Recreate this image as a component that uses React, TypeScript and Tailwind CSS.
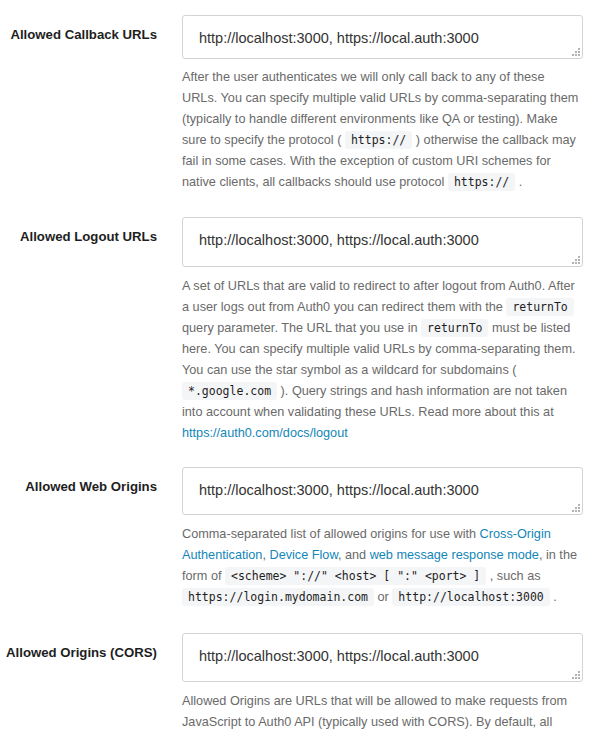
import React from "react";

const C = ({ children }: { children: React.ReactNode }) => (
  <code className="whitespace-pre rounded-[3px] bg-[#f4f5f7] px-[6px] py-[2px] font-['DejaVu_Sans_Mono',monospace] text-[11.5px] leading-none text-[#1d1d1d]">
    {children}
  </code>
);

const A = ({ children }: { children: React.ReactNode }) => (
  <a className="text-[#1286b8]" href="#">
    {children}
  </a>
);

const Dots = () => (
  <svg
    className="pointer-events-none absolute bottom-[3px] right-[3px]"
    width="9"
    height="9"
    viewBox="0 0 9 9"
  >
    <g fill="#b3b3b3">
      <rect x="7" y="1" width="2" height="2" />
      <rect x="4" y="4" width="2" height="2" />
      <rect x="7" y="4" width="2" height="2" />
      <rect x="1" y="7" width="2" height="2" />
      <rect x="4" y="7" width="2" height="2" />
      <rect x="7" y="7" width="2" height="2" />
    </g>
  </svg>
);

type SectionProps = {
  label: string;
  taClass: string;
  helpClass: string;
  lines: React.ReactNode[];
  sectionClass: string;
};

const Section = ({ label, taClass, helpClass, lines, sectionClass }: SectionProps) => (
  <div className={"flex " + sectionClass}>
    <div className="w-[157px] shrink-0 whitespace-nowrap pt-[10px] text-right text-[13.2px] font-bold leading-5 text-[#1e1e1e]">
      {label}
    </div>
    <div className="ml-[25px] w-[401px] shrink-0">
      <div className="relative">
        <textarea
          readOnly
          defaultValue="http://localhost:3000, https://local.auth:3000"
          className={
            "block w-full resize-none overflow-hidden rounded-[3px] border border-[#d3d3d3] bg-white px-[16px] pt-[12px] text-[14.5px] leading-5 text-[#333] outline-none " +
            taClass
          }
        />
        <Dots />
      </div>
      <div className={"text-[12.7px] leading-[21px] text-[#6a6a6a] " + helpClass}>
        {lines.map((l, i) => (
          <div key={i} className="h-[21px] whitespace-nowrap">
            {l}
          </div>
        ))}
      </div>
    </div>
  </div>
);

export default function App() {
  return (
    <div className="h-[734px] w-[610px] overflow-hidden bg-white pt-[15px] font-['Liberation_Sans',Arial,sans-serif]">
      <Section
        label="Allowed Callback URLs"
        taClass="h-[44px]"
        helpClass="mt-[8px]"
        sectionClass="mb-[24px]"
        lines={[
          "After the user authenticates we will only call back to any of these",
          "URLs. You can specify multiple valid URLs by comma-separating them",
          "(typically to handle different environments like QA or testing). Make",
          <>
            sure to specify the protocol ( <C>https://</C> ) otherwise the callback may
          </>,
          "fail in some cases. With the exception of custom URI schemes for",
          <>
            native clients, all callbacks should use protocol <C>https://</C> .
          </>,
        ]}
      />
      <Section
        label="Allowed Logout URLs"
        taClass="h-[50px]"
        helpClass="mt-[9px]"
        sectionClass="mb-[23px]"
        lines={[
          "A set of URLs that are valid to redirect to after logout from Auth0. After",
          <>
            a user logs out from Auth0 you can redirect them with the <C>returnTo</C>
          </>,
          <>
            query parameter. The URL that you use in <C>returnTo</C> must be listed
          </>,
          "here. You can specify multiple valid URLs by comma-separating them.",
          "You can use the star symbol as a wildcard for subdomains (",
          <>
            <C>*.google.com</C> ). Query strings and hash information are not taken
          </>,
          "into account when validating these URLs. Read more about this at",
          <A>https://auth0.com/docs/logout</A>,
        ]}
      />
      <Section
        label="Allowed Web Origins"
        taClass="h-[48px]"
        helpClass="mt-[9px]"
        sectionClass="mb-[25px]"
        lines={[
          <>
            Comma-separated list of allowed origins for use with <A>Cross-Origin</A>
          </>,
          <>
            <A>Authentication</A>, <A>Device Flow</A>, and <A>web message response mode</A>, in the
          </>,
          <>
            form of <C>{'<scheme> "://" <host> [ ":" <port> ]'}</C> , such as
          </>,
          <>
            <C>https://login.mydomain.com</C> or <C>http://localhost:3000</C> .
          </>,
        ]}
      />
      <Section
        label="Allowed Origins (CORS)"
        taClass="h-[49px]"
        helpClass="mt-[9px]"
        sectionClass=""
        lines={[
          "Allowed Origins are URLs that will be allowed to make requests from",
          "JavaScript to Auth0 API (typically used with CORS). By default, all",
          "your callback URLs will be allowed. This field allows you to enter",
          "other origins if you need to.",
        ]}
      />
    </div>
  );
}
